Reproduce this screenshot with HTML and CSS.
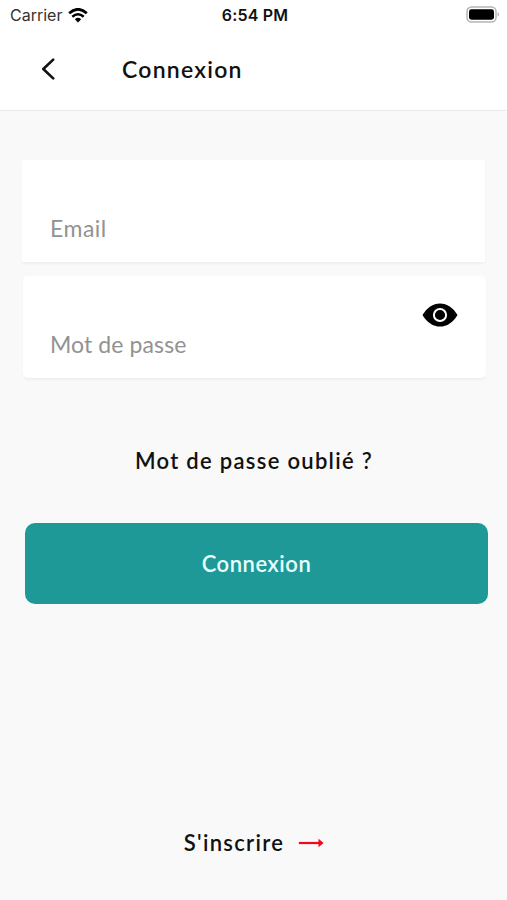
FILE: index.html
```
<!DOCTYPE html>
<html lang="fr">
<head>
    <meta charset="UTF-8">
    <meta name="viewport" content="width=device-width, initial-scale=1.0">
    <title>Connexion</title>
    <link rel="stylesheet" href="styles.css">
</head>

<body>
    <!-- Barre de statut -->
    <div class="status-bar">
        <div class="carrier">
            <span>Carrier</span>
            <svg class="wifi" viewBox="0 0 20 15" width="20" height="15">
                <path d="M1.2 5.2Q10 -2.6 18.8 5.2" fill="none" stroke="#000" stroke-width="2.7"/>
                <path d="M4.3 8.7Q10 3.7 15.7 8.7" fill="none" stroke="#000" stroke-width="2.5"/>
                <path d="M6.8 11.2Q10 8.3 13.2 11.2L10 14.4Z"/>
            </svg>
        </div>
        <span class="time">6:54 PM</span>
        <svg class="battery" viewBox="0 0 34 17" width="34" height="17">
            <rect x="1" y="1" width="29" height="15" rx="4.5" fill="#fff" stroke="#b5b5b5" stroke-width="1.5"/>
            <rect x="3" y="3.3" width="25" height="10.4" rx="2.4"/>
            <path d="M31.6 6.3Q33.2 7 33.2 8.5Q33.2 10 31.6 10.7Z" fill="#b5b5b5"/>
        </svg>
    </div>

    <header>
        <a href="#" class="back" aria-label="Retour">
            <svg viewBox="0 0 14 22" width="14" height="22">
                <path d="M12.2 1.6L2.3 11L12.2 20.4" fill="none" stroke="#111" stroke-width="2.6" stroke-linecap="round" stroke-linejoin="round"/>
            </svg>
        </a>
        <h1>Connexion</h1>
    </header>

    <main>
        <!-- Formulaire de connexion -->
        <form>
            <div class="field email">
                <input type="email" placeholder="Email">
            </div>
            <div class="field password">
                <input type="password" placeholder="Mot de passe">
                <svg class="eye" viewBox="0 0 36 24" width="36" height="24">
                    <path d="M.5 12C5 4.5 11 .4 18 .4S31 4.5 35.5 12C31 19.5 25 23.6 18 23.6S5 19.5 .5 12Z"/>
                    <circle cx="18" cy="12" r="6.1" fill="#000" stroke="#fff" stroke-width="2"/>
                </svg>
            </div>
            <a href="#" class="forgot">Mot de passe oublié ?</a>
            <button type="button">Connexion</button>
        </form>

        <a href="#" class="register">
            <span>S'inscrire</span>
            <svg viewBox="0 0 26 10" width="26" height="10">
                <path d="M.8 5H22" stroke="#f3091d" stroke-width="2.2"/>
                <path d="M20.5 .7L25.6 5L20.5 9.3Z" fill="#f3091d"/>
            </svg>
        </a>
    </main>
</body>

</html>
```
FILE: styles.css
```
* {
    box-sizing: border-box;
}

body {
    display: flex;
    flex-direction: column;
    height: 900px;
    margin: 0;
    overflow: hidden;
    font-family: Lato, "Open Sans", sans-serif;
    background-color: #f9f9f9;
    color: #111;
}

a {
    color: inherit;
    text-decoration: none;
}

/* Barre de statut */
.status-bar {
    display: grid;
    grid-template-columns: 1fr auto 1fr;
    align-items: center;
    height: 30px;
    padding: 0 7px 0 10px;
    background-color: #fff;
    font-family: Inter, sans-serif;
    font-size: 16px;
}

.carrier {
    display: flex;
    align-items: center;
    gap: 6px;
    color: #333;
}

.time {
    font-weight: 600;
    letter-spacing: 0.2px;
}

.battery {
    justify-self: end;
    margin-bottom: 2px;
}

/* En-tête */
header {
    display: flex;
    align-items: center;
    height: 81px;
    padding: 0 0 2px 41px;
    background-color: #fff;
    border-bottom: 1px solid #eaeaea;
}

.back {
    display: flex;
    width: 81px;
}

h1 {
    margin: 0;
    font-size: 23px;
    font-weight: 600;
    line-height: 28px;
    letter-spacing: 1.25px;
}

main {
    display: flex;
    flex: 1;
    flex-direction: column;
    justify-content: space-between;
    padding: 49px 19px 43px 22px;
}

form {
    display: flex;
    flex-direction: column;
}

/* Champs de saisie */
.field {
    display: flex;
    width: 463px;
    height: 102px;
    background-color: #fff;
    box-shadow: 0 2px 2px rgba(0, 0, 0, 0.04);
}

.password {
    margin: 14px 0 0 1px;
    border-radius: 5px;
}

.field input {
    flex: 1;
    min-width: 0;
    padding: 33px 0 0 27px;
    border: none;
    outline: none;
    background: none;
    font-family: inherit;
    font-size: 23px;
    letter-spacing: 0.1px;
}

.email input {
    padding-left: 28px;
    letter-spacing: 0.5px;
}

.field input::placeholder {
    color: #929292;
}

.eye {
    margin: 27px 28px 0 0;
}

.forgot {
    align-self: center;
    margin: 69px 2px 0 0;
    font-size: 22px;
    font-weight: 600;
    line-height: 28px;
    letter-spacing: 1.3px;
}

button {
    width: 463px;
    height: 81px;
    margin: 48px 0 0 3px;
    border: none;
    border-radius: 10px;
    background-color: #1f9998;
    color: #e8ffff;
    font-family: inherit;
    font-size: 22px;
    font-weight: 600;
    letter-spacing: 0.55px;
}

/* Lien d'inscription */
.register {
    display: flex;
    align-items: center;
    align-self: center;
    gap: 14px;
    margin-right: 2px;
    font-size: 22px;
    font-weight: 600;
    line-height: 28px;
    letter-spacing: 1.3px;
}
```
